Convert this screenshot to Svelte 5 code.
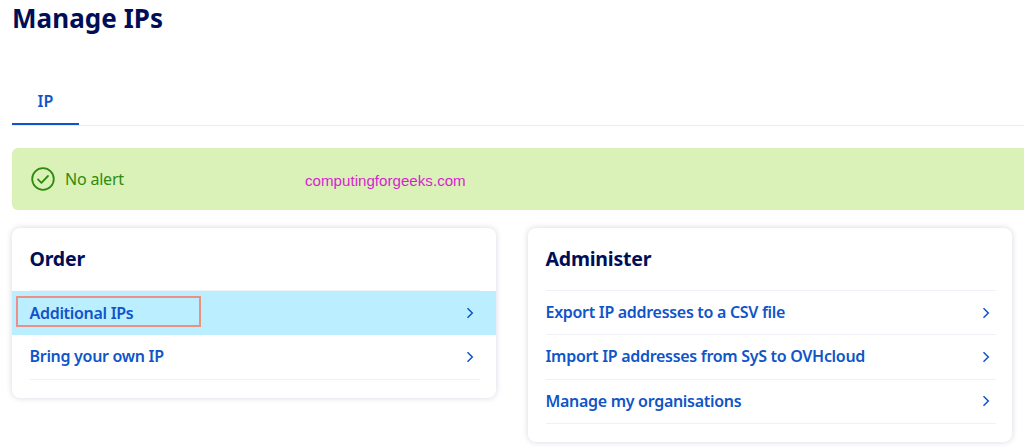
<script lang="ts">
	const orderLinks = ['Additional IPs', 'Bring your own IP'];
	const adminLinks = ['Export IP addresses to a CSV file', 'Import IP addresses from SyS to OVHcloud', 'Manage my organisations'];
</script>

<main class="page">
	<h1>Manage IPs</h1>

	<nav class="tabs">
		<span class="tab">IP</span>
	</nav>

	<div class="alert">
		<svg class="alert-icon" viewBox="0 0 24 24" width="24" height="24" fill="none" stroke="#2e8b0e" stroke-width="1.8">
			<circle cx="12" cy="12" r="10.8" />
			<path d="M7 12.4l3.4 3.4L17 9" stroke-linecap="round" stroke-linejoin="round" />
		</svg>
		<span class="alert-text">No alert</span>
		<span class="watermark">computingforgeeks.com</span>
	</div>

	<div class="cards">
		<section class="card">
			<h2>Order</h2>
			<ul>
				{#each orderLinks as label, i}
					<li class:active={i === 0}>
						{#if i === 0}<span class="callout"></span>{/if}
						<span class="label">{label}</span>
						<svg viewBox="0 0 8 12" width="8" height="12" fill="none" stroke="#0f55c8" stroke-width="1.5"><path d="M1.5 1.2L6.3 6l-4.8 4.8" /></svg>
					</li>
				{/each}
			</ul>
		</section>

		<section class="card">
			<h2>Administer</h2>
			<ul>
				{#each adminLinks as label}
					<li>
						<span class="label">{label}</span>
						<svg viewBox="0 0 8 12" width="8" height="12" fill="none" stroke="#0f55c8" stroke-width="1.5"><path d="M1.5 1.2L6.3 6l-4.8 4.8" /></svg>
					</li>
				{/each}
			</ul>
		</section>
	</div>
</main>

<style>
	:global(body) {
		background: #fff;
		overflow: hidden;
	}

	.page {
		height: 447px;
		overflow: hidden;
		padding-left: 12px;
		font-family: 'Noto Sans', 'Open Sans', sans-serif;
		box-sizing: border-box;
	}

	h1 {
		margin: 0;
		padding-top: 0;
		height: 70px;
		box-sizing: border-box;
		font-size: 26px;
		line-height: 36px;
		font-weight: 700;
		color: #000e57;
		letter-spacing: 0.05px;
	}

	.tabs {
		height: 56px;
		box-sizing: border-box;
		border-bottom: 1px solid #e6eef5;
		display: flex;
	}

	.tab {
		width: 67px;
		height: 55px;
		box-sizing: border-box;
		border-bottom: 2px solid #0f55c8;
		text-align: center;
		line-height: 62px;
		font-size: 16px;
		font-weight: 600;
		color: #0f55c8;
	}

	.alert {
		position: relative;
		margin-top: 22px;
		width: 1040px;
		height: 62px;
		box-sizing: border-box;
		padding-left: 19px;
		display: flex;
		align-items: center;
		gap: 10px;
		border-radius: 6px;
		background: #daf1b8;
		color: #2e8b0e;
		font-size: 16px;
	}

	.alert-text {
		padding-bottom: 1px;
		letter-spacing: -0.2px;
	}

	.watermark {
		position: absolute;
		left: 293px;
		top: 24px;
		font-family: 'Liberation Sans', Arial, sans-serif;
		font-size: 15.15px;
		line-height: 18px;
		color: #d91fd0;
	}

	.cards {
		margin-top: 18px;
		display: flex;
		align-items: flex-start;
		gap: 32px;
	}

	.card {
		width: 484px;
		box-sizing: border-box;
		padding-bottom: 18px;
		border-radius: 8px;
		background: #fff;
		box-shadow: 0 0 6px rgba(0, 14, 87, 0.16);
		overflow: hidden;
	}

	h2 {
		margin: 0;
		padding-left: 17.5px;
		height: 62px;
		font-size: 19.5px;
		line-height: 62px;
		font-weight: 700;
		color: #000e57;
		letter-spacing: -0.2px;
	}

	ul {
		margin: 0 16px 0 17.5px;
		padding: 0;
		list-style: none;
		border-top: 1px solid #eef2f6;
	}

	li {
		position: relative;
		height: 44.33px;
		box-sizing: border-box;
		display: flex;
		align-items: center;
		justify-content: space-between;
		padding-right: 6px;
		border-bottom: 1px solid #eef2f6;
		font-size: 16px;
		font-weight: 600;
		color: #0f55c8;
		letter-spacing: -0.3px;
	}

	.label {
		padding-bottom: 1px;
	}

	li.active {
		margin: 0 -16px 0 -17.5px;
		padding: 0 22px 0 17.5px;
		background: #bbeeff;
		border-bottom: 0;
	}

	.callout {
		position: absolute;
		left: 4px;
		top: 5px;
		width: 185px;
		height: 31px;
		box-sizing: border-box;
		border: 2px solid #ee8f86;
	}
</style>
